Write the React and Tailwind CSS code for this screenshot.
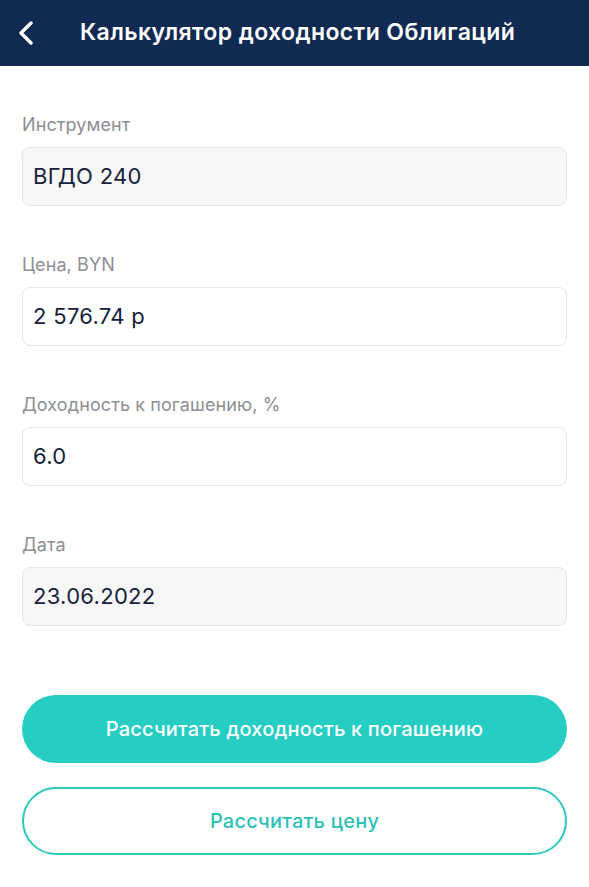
import React from "react";

const fields = [
  { label: "Инструмент", value: "ВГДО 240", readOnly: true },
  { label: "Цена, BYN", value: "2 576.74 р", readOnly: false },
  { label: "Доходность к погашению, %", value: "6.0", readOnly: false },
  { label: "Дата", value: "23.06.2022", readOnly: true },
];

function Field({ label, value, readOnly }) {
  return (
    <div className="flex flex-col">
      <div className="text-[18px] leading-[22px] tracking-[0.1px] text-[#8e8e93] mb-[11px]">{label}</div>
      <div
        className={
          readOnly
            ? "h-[59px] rounded-[8px] border border-[#e6e6e8] bg-[#f7f7f8] flex items-center px-[10px] text-[22px] tracking-[0.3px] text-[#17223a]"
            : "h-[59px] rounded-[8px] border border-[#e6e6e8] bg-white flex items-center px-[10px] text-[22px] tracking-[0.3px] text-[#17223a]"
        }
      >
        {value}
      </div>
    </div>
  );
}

export default function App() {
  return (
    <div className="w-[589px] h-[887px] bg-white font-['Inter',sans-serif]">
      <div className="h-[66px] bg-[#112a52] flex items-center">
        <div className="w-[80px] pl-[17px] flex items-center">
          <svg width="18" height="24" viewBox="0 0 18 24" fill="none">
            <path d="M14 2 L4 12 L14 22" stroke="white" strokeWidth="3.4" strokeLinecap="round" strokeLinejoin="round" />
          </svg>
        </div>
        <div className="text-white text-[23px] font-semibold tracking-[0.4px] pb-[2px]">
          Калькулятор доходности Облигаций
        </div>
      </div>

      <div className="px-[22px] pt-[48px] flex flex-col gap-[48px]">
        {fields.map((f) => (
          <Field key={f.label} {...f} />
        ))}
      </div>

      <div className="px-[22px] mt-[69px] flex flex-col gap-[24px]">
        <button className="h-[68px] rounded-full bg-[#26cdc3] text-white text-[20px] font-medium tracking-[0.2px]">
          Рассчитать доходность к погашению
        </button>
        <button className="h-[68px] rounded-full border-[2.5px] border-[#2cc8be] bg-white text-[#2cc0b6] text-[20px] font-medium tracking-[0.2px]">
          Рассчитать цену
        </button>
      </div>
    </div>
  );
}
